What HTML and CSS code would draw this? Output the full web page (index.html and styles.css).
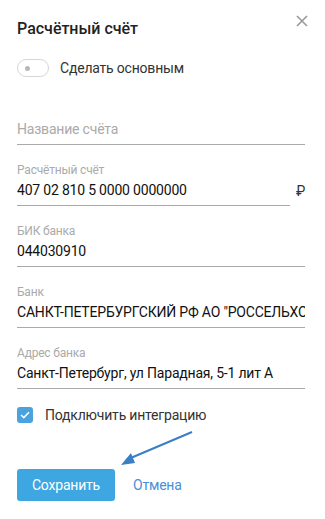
FILE: index.html
```html
<!DOCTYPE html>
<html lang="ru">

<head>
    <meta charset="UTF-8">
    <meta name="viewport" content="width=device-width, initial-scale=1.0">
    <title>Расчётный счёт</title>
    <link rel="stylesheet" href="styles.css">
</head>

<body>
    <div class="modal">
        <div class="modal-head">
            <h2 class="modal-title">Расчётный счёт</h2>
            <span class="close">
                <svg width="12" height="12" viewBox="0 0 12 12">
                    <path d="M1 1 L11 11 M11 1 L1 11" stroke="#9a9a9a" stroke-width="1.6" />
                </svg>
            </span>
        </div>

        <div class="switch-row">
            <span class="switch"><i class="switch-knob"></i></span>
            <span class="switch-label">Сделать основным</span>
        </div>

        <div class="field field-empty">
            <div class="field-input placeholder">Название счёта</div>
        </div>

        <div class="field field-currency">
            <div class="field-main">
                <div class="field-label">Расчётный счёт</div>
                <div class="field-input">407 02 810 5 0000 0000000</div>
            </div>
            <span class="currency">₽</span>
        </div>

        <div class="field">
            <div class="field-label">БИК банка</div>
            <div class="field-input">044030910</div>
        </div>

        <div class="field">
            <div class="field-label">Банк</div>
            <div class="field-input">САНКТ-ПЕТЕРБУРГСКИЙ РФ АО "РОССЕЛЬХОЗБАНК"</div>
        </div>

        <div class="field">
            <div class="field-label">Адрес банка</div>
            <div class="field-input">Санкт-Петербург, ул Парадная, 5-1 лит А</div>
        </div>

        <label class="check-row">
            <span class="checkbox">
                <svg width="10" height="8" viewBox="0 0 10 8">
                    <path d="M1 4 L3.8 6.6 L9 1.2" fill="none" stroke="#fff" stroke-width="1.5" />
                </svg>
            </span>
            <span class="check-label">Подключить интеграцию</span>
        </label>

        <div class="actions">
            <button class="btn-save">Сохранить</button>
            <a class="btn-cancel" href="#">Отмена</a>
        </div>

        <!-- pointer annotation -->
        <svg class="hint-arrow" width="90" height="45" viewBox="0 0 90 45">
            <path d="M82 2 L16 30" stroke="#3b7ec6" stroke-width="2" />
            <polygon points="11,35 21,23 25,33" fill="#3b7ec6" />
        </svg>
    </div>
</body>

</html>
```

FILE: styles.css
```css
* {
    padding: 0;
    margin: 0;
    box-sizing: border-box;
}

body {
    font-family: Roboto, "Noto Sans", sans-serif;
    background-color: #fff;
    color: #1a1a1a;
    letter-spacing: -0.2px;
}

.modal {
    position: relative;
    width: 325px;
    height: 519px;
    padding: 19px 20px 0 17px;
}

.modal-head {
    display: flex;
    justify-content: space-between;
    align-items: flex-start;
}

.modal-title {
    font-size: 16px;
    font-weight: 500;
    line-height: 20px;
    color: #222;
    letter-spacing: 0;
}

.close {
    margin-top: -4px;
    margin-right: -3px;
    display: flex;
}

.switch-row {
    display: flex;
    align-items: center;
    margin-top: 20px;
    height: 18px;
}

.switch {
    position: relative;
    width: 32px;
    height: 18px;
    border: 1px solid #d6d6d6;
    border-radius: 9px;
    background-color: #fff;
}

.switch-knob {
    position: absolute;
    left: 7px;
    top: 6px;
    width: 5px;
    height: 5px;
    border-radius: 50%;
    background-color: #b8b8b8;
}

.switch-label {
    margin-left: 11px;
    font-size: 14px;
    color: #333;
}

.field {
    margin-top: 18px;
    border-bottom: 1px solid #aaa;
    padding-bottom: 6px;
}

.field-empty {
    margin-top: 44px;
}

.field-label {
    font-size: 12px;
    line-height: 14px;
    color: #aaa;
}

.field-input {
    margin-top: 5px;
    font-size: 14px;
    line-height: 17px;
    white-space: nowrap;
    overflow: hidden;
    color: #111;
}

.placeholder {
    margin-top: 0;
    color: #aaa;
}

.field-currency {
    display: flex;
    align-items: flex-end;
    border-bottom: 0;
    padding-bottom: 0;
}

.field-main {
    flex: 1;
    border-bottom: 1px solid #aaa;
    padding-bottom: 6px;
}

.currency {
    width: 15px;
    margin-bottom: 7px;
    text-align: right;
    font-size: 14px;
    color: #333;
}

.check-row {
    display: flex;
    align-items: center;
    margin-top: 18px;
}

.checkbox {
    width: 16px;
    height: 16px;
    border-radius: 3px;
    background-color: #4aa3df;
    display: flex;
    align-items: center;
    justify-content: center;
}

.check-label {
    margin-left: 12px;
    font-size: 14px;
    color: #333;
}

.actions {
    display: flex;
    align-items: center;
    margin-top: 46px;
}

.btn-save {
    width: 98px;
    height: 32px;
    border: 0;
    border-radius: 3px;
    background-color: #3ea6e0;
    color: #fff;
    font-family: inherit;
    font-size: 14px;
    letter-spacing: inherit;
}

.btn-cancel {
    margin-left: 18px;
    font-size: 14px;
    color: #4a8fd8;
    text-decoration: none;
}

.hint-arrow {
    position: absolute;
    left: 110px;
    top: 430px;
}
```
